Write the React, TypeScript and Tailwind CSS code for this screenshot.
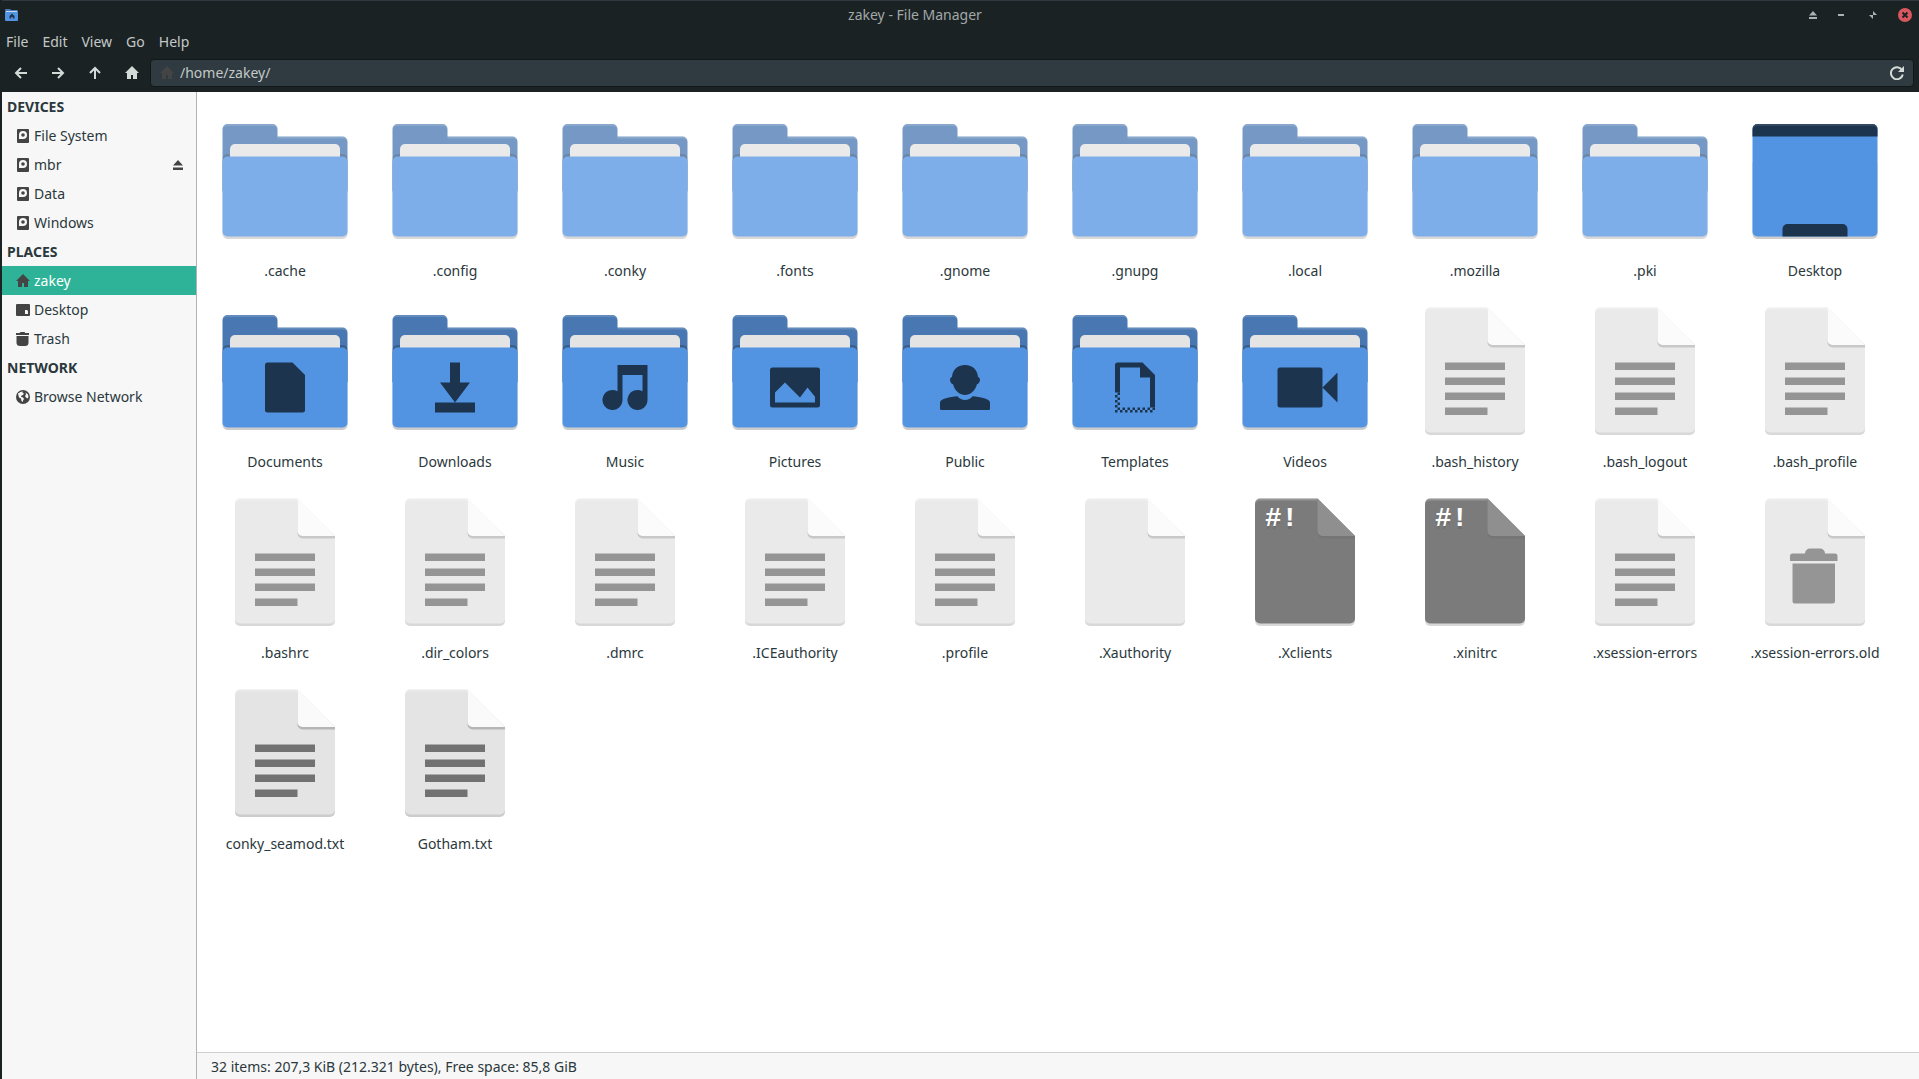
import React, { useState } from 'react';

type Glyph = 'document' | 'download' | 'music' | 'picture' | 'person' | 'template' | 'video';

type FileItem = {
  name: string;
  kind: 'folder' | 'desktop' | 'text' | 'blank' | 'script' | 'trash';
  glyph?: Glyph;
};

const files: FileItem[] = [
  { name: '.cache', kind: 'folder' },
  { name: '.config', kind: 'folder' },
  { name: '.conky', kind: 'folder' },
  { name: '.fonts', kind: 'folder' },
  { name: '.gnome', kind: 'folder' },
  { name: '.gnupg', kind: 'folder' },
  { name: '.local', kind: 'folder' },
  { name: '.mozilla', kind: 'folder' },
  { name: '.pki', kind: 'folder' },
  { name: 'Desktop', kind: 'desktop' },
  { name: 'Documents', kind: 'folder', glyph: 'document' },
  { name: 'Downloads', kind: 'folder', glyph: 'download' },
  { name: 'Music', kind: 'folder', glyph: 'music' },
  { name: 'Pictures', kind: 'folder', glyph: 'picture' },
  { name: 'Public', kind: 'folder', glyph: 'person' },
  { name: 'Templates', kind: 'folder', glyph: 'template' },
  { name: 'Videos', kind: 'folder', glyph: 'video' },
  { name: '.bash_history', kind: 'text' },
  { name: '.bash_logout', kind: 'text' },
  { name: '.bash_profile', kind: 'text' },
  { name: '.bashrc', kind: 'text' },
  { name: '.dir_colors', kind: 'text' },
  { name: '.dmrc', kind: 'text' },
  { name: '.ICEauthority', kind: 'text' },
  { name: '.profile', kind: 'text' },
  { name: '.Xauthority', kind: 'blank' },
  { name: '.Xclients', kind: 'script' },
  { name: '.xinitrc', kind: 'script' },
  { name: '.xsession-errors', kind: 'text' },
  { name: '.xsession-errors.old', kind: 'trash' },
  { name: 'conky_seamod.txt', kind: 'text' },
  { name: 'Gotham.txt', kind: 'text' },
];

const HOME_PATH = 'M7 0 0 7h2v6h4V9h2v4h4V7h2z';

// ---- small icons ----

function HomeIcon({ className }: { className?: string }) {
  return (
    <svg viewBox="0 0 14 14" className={className} fill="currentColor">
      <path d={HOME_PATH} />
    </svg>
  );
}

function DriveIcon() {
  return (
    <svg viewBox="0 0 14 14" className="w-3.5 h-3.5 text-[#444]">
      <rect x="1" y="0" width="12" height="14" rx="1" fill="currentColor" />
      <path d="M7 2a4 4 0 1 1 0 8H3V6a4 4 0 0 1 4-4z" fill="#f7f7f7" />
      <circle cx="7" cy="6" r="1.8" fill="currentColor" />
    </svg>
  );
}

function DesktopIcon() {
  return (
    <svg viewBox="0 0 14 14" className="w-3.5 h-3.5 text-[#444]">
      <rect x="0" y="1" width="14" height="12" rx="1" fill="currentColor" />
      <path d="M9 7h2l1 1v3H9z" fill="#f7f7f7" />
    </svg>
  );
}

function TrashIcon() {
  return (
    <svg viewBox="0 0 14 14" className="w-3.5 h-3.5 text-[#444]" fill="currentColor">
      <path d="M4.500 0h4l.8 1H13v2H0V1h3.700z" />
      <path d="M.5 4h12v6.500A3.500 3.500 0 0 1 9 14H4a3.500 3.500 0 0 1-3.500-3.500z" />
    </svg>
  );
}

function GlobeIcon() {
  return (
    <svg viewBox="0 0 14 14" className="w-3.5 h-3.5 text-[#444]">
      <circle cx="7" cy="7" r="7" fill="currentColor" />
      <path d="M2 3.500 4.500 2 7 1.500 6.500 3 8 3.500 7 5 5.500 5.500 5 7l2 .5L8 9l-1 1.500V12L5.500 11 5 8.500 3 7.500z" fill="#f7f7f7" />
      <path d="M9.500 2.500 12 4.500l.5 2.500-1 1.500-1.500-1L9 6l1-1.500z" fill="#f7f7f7" />
    </svg>
  );
}

function EjectIcon({ className }: { className?: string }) {
  return (
    <svg viewBox="0 0 10 10" preserveAspectRatio="none" className={className} fill="currentColor">
      <path d="M5 0 0 5.500h10zM0 7.500h10v2.500H0z" />
    </svg>
  );
}

function ArrowIcon({ d }: { d: string }) {
  return (
    <svg viewBox="0 0 14 14" className="w-3.5 h-3.5" fill="none" stroke="currentColor" strokeWidth="2">
      <path d={d} />
    </svg>
  );
}

function AppIcon() {
  return (
    <svg viewBox="0 0 13 12" className="w-[13px] h-3">
      <path d="M0 1a1 1 0 0 1 1-1h4l1 1h6a1 1 0 0 1 1 1v8H0z" fill="#4877b1" />
      <rect x="1" y="2" width="11" height="3" fill="#c9d7ea" />
      <rect x="0" y="3" width="13" height="9" rx="1" fill="#5294e2" />
      <path d="M7 4.500 4.500 7v2.500h1.700V8h1.600v1.500h1.700V7z" fill="#1d344f" />
    </svg>
  );
}

// ---- large icons, all on a 64 unit canvas ----

function FolderGlyph({ glyph }: { glyph: Glyph }) {
  switch (glyph) {
    case 'document':
      return <path d="M25 29h10l5 5v14a1 1 0 0 1-1 1H25a1 1 0 0 1-1-1V30a1 1 0 0 1 1-1z" />;
    case 'download':
      return <path d="M30 29h4v8h4l-6 8-6-8h4zM24 45h16v4H24z" />;
    case 'music':
      return <path d="M29 30h12v14a4 4 0 1 1-2-3.460V34h-8v10a4 4 0 1 1-2-3.460z" />;
    case 'picture':
      return (
        <path
          fillRule="evenodd"
          d="M23 31h18a1 1 0 0 1 1 1v14a1 1 0 0 1-1 1H23a1 1 0 0 1-1-1V32a1 1 0 0 1 1-1zM24 45h16v-2.300L37 39l-3 4-6-6-4 4z"
        />
      );
    case 'person':
      return (
        <>
          <path d="M32 30c3.200 0 5 2 5.200 4.800.5.100.8.600.8 1.200s-.5 1.600-1.200 1.700C36 40.500 34 42 32 42s-4-1.500-4.800-4.300C26.500 37.600 26 36.600 26 36s.3-1.100.8-1.200C27 32 28.800 30 32 30z" />
          <path d="M29 42.500c.8 1 1.800 1.500 3 1.500s2.200-.5 3-1.500c3 .2 7 1 7 2.500v2.500a.5.5 0 0 1-.5.500h-19a.5.5 0 0 1-.5-.5V45c0-1.500 4-2.300 7-2.500z" />
        </>
      );
    case 'template':
      return (
        <>
          <path d="M25 29h10l5 5v13h-2V35h-4v-4h-8v10h-2V30a1 1 0 0 1 1-1z" />
          {/* dotted corner that trails off along the left and bottom edges */}
          <path d="M24 42h1v1h-1zM25 41h1v1h-1zM25 43h1v1h-1zM24 44h1v1h-1zM25 45h1v1h-1zM24 46h1v1h-1z" />
          <path d="M25 47.500h15" fill="none" stroke="#1d344f" strokeDasharray="1 1" />
          <path d="M24 48.500h16" fill="none" stroke="#1d344f" strokeDasharray="1 1" />
        </>
      );
    case 'video':
      return <path d="M22 31h16a1 1 0 0 1 1 1v14a1 1 0 0 1-1 1H22a1 1 0 0 1-1-1V32a1 1 0 0 1 1-1zM39 39l6-6v12z" />;
  }
}

function FolderIcon({ glyph }: { glyph?: Glyph }) {
  return (
    <>
      <rect x="7" y="24" width="50" height="32" rx="2" fill="#000" fillOpacity=".2" />
      <path d="M9 10h18a2 2 0 0 1 2 2v3h26a2 2 0 0 1 2 2v20H7V12a2 2 0 0 1 2-2z" fill="#4877b1" />
      <path d="M9 10h18a2 2 0 0 1 2 2v.6a2 2 0 0 0-2-1.800H9a2 2 0 0 0-2 1.800V12a2 2 0 0 1 2-2zM29 15h26a2 2 0 0 1 2 2v.6a2 2 0 0 0-2-1.800H29z" fill="#fff" fillOpacity=".15" />
      <rect x="7" y="22" width="50" height="16" rx="2" fill="#000" fillOpacity=".2" />
      <path d="M10 20a2 2 0 0 1 2-2h40a2 2 0 0 1 2 2v10H10z" fill="#e4e4e4" />
      <rect x="7" y="23" width="50" height="32" rx="2" fill="#5294e2" />
      {glyph && (
        <g fill="#1d344f">
          <FolderGlyph glyph={glyph} />
        </g>
      )}
    </>
  );
}

function DesktopFolderIcon() {
  return (
    <>
      <rect x="7" y="24" width="50" height="32" rx="2" fill="#000" fillOpacity=".2" />
      <rect x="7" y="10" width="50" height="45" rx="2" fill="#5294e2" />
      <path d="M9 10h46a2 2 0 0 1 2 2v3H7v-3a2 2 0 0 1 2-2z" fill="#1d344f" />
      <path d="M9 10h46a2 2 0 0 1 2 2v.6a2 2 0 0 0-2-1.800H9a2 2 0 0 0-2 1.800V12a2 2 0 0 1 2-2z" fill="#fff" fillOpacity=".1" />
      <path d="M21 50h22a2 2 0 0 1 2 2v3H19v-3a2 2 0 0 1 2-2z" fill="#1d344f" />
    </>
  );
}

function PageIcon({ kind }: { kind: FileItem['kind'] }) {
  const dark = kind === 'script';
  return (
    <>
      <path d="M12 50h40v6a2 2 0 0 1-2 2H14a2 2 0 0 1-2-2z" fill="#000" fillOpacity=".2" />
      <path d="M14 7h23l15 15v33a2 2 0 0 1-2 2H14a2 2 0 0 1-2-2V9a2 2 0 0 1 2-2z" fill={dark ? '#505050' : '#e4e4e4'} />
      <path d="M14 7h23v.8H14a2 2 0 0 0-2 1.800V9a2 2 0 0 1 2-2z" fill="#fff" fillOpacity=".2" />
      <path d="M37 8v13a2 2 0 0 0 2 2h13v-1z" fill="#000" fillOpacity={dark ? '.1' : '.2'} />
      <path d="M37 7v13a2 2 0 0 0 2 2h13z" fill={dark ? '#6a6a6a' : '#fafafa'} />
      {kind === 'text' && (
        <path d="M20 29h24v3H20zM20 35h24v3H20zM20 41h24v3H20zM20 47h17v3H20z" fill="#727272" />
      )}
      {kind === 'trash' && (
        <path
          d="M30 27h4a2 2 0 0 1 2 2h4a1 1 0 0 1 1 1v2H22v-2a1 1 0 0 1 1-1h5a2 2 0 0 1 2-2zM23 33h17v15a1 1 0 0 1-1 1H24a1 1 0 0 1-1-1z"
          fill="#727272"
        />
      )}
      {dark && (
        <g fontSize="11" fontWeight="700" className="font-['Liberation_Mono',monospace]">
          <text x="16" y="19" fill="#000" fillOpacity=".2">#!</text>
          <text x="16" y="18" fill="#fff">#!</text>
        </g>
      )}
    </>
  );
}

function FileTile({ file }: { file: FileItem }) {
  const hidden = file.name.startsWith('.');
  return (
    <button className="flex flex-col items-center pb-[9px]">
      <svg viewBox="0 0 64 64" className={`w-40 h-40 ${hidden ? 'opacity-75' : ''}`}>
        {file.kind === 'folder' ? (
          <FolderIcon glyph={file.glyph} />
        ) : file.kind === 'desktop' ? (
          <DesktopFolderIcon />
        ) : (
          <PageIcon kind={file.kind} />
        )}
      </svg>
      <span className="mt-0.5 leading-5">{file.name}</span>
    </button>
  );
}

// ---- window chrome ----

function TitleBar() {
  return (
    <header className="h-7 pl-[3px] pr-1.5 flex items-center border-t border-[#2f3b40]">
      <div className="w-6">
        <AppIcon />
      </div>
      <h1 className="flex-1 text-center text-[#a1a8a8]">zakey - File Manager</h1>
      <div className="flex items-center gap-4 text-[#a9b3b1]">
        <button aria-label="Shade" className="w-4 h-4 flex items-center justify-end">
          <EjectIcon className="w-2 h-2" />
        </button>
        <button aria-label="Minimize" className="w-4 h-4 flex items-center justify-center">
          <span className="w-1.5 h-0.5 bg-current"></span>
        </button>
        <button aria-label="Maximize" className="w-4 h-4 flex items-center justify-center">
          <svg viewBox="0 0 8 8" className="w-2 h-2" fill="currentColor">
            <path d="M4 0v4h4zM0 4h4v4z" />
          </svg>
        </button>
        <button aria-label="Close" className="w-4 h-4 flex items-center justify-center">
          <svg viewBox="0 0 14 14" className="w-3.5 h-3.5">
            <circle cx="7" cy="7" r="7" fill="#d9575f" />
            <path d="M4.500 4.500l5 5M9.500 4.500l-5 5" stroke="#1b2224" strokeWidth="2" />
          </svg>
        </button>
      </div>
    </header>
  );
}

function MenuBar() {
  return (
    <nav className="h-7 pl-1 flex items-center gap-3.5 text-[#c3c9c8]">
      {['File', 'Edit', 'View', 'Go', 'Help'].map((item) => (
        <button key={item}>{item}</button>
      ))}
    </nav>
  );
}

function ToolBar() {
  const [path, setPath] = useState('/home/zakey/');

  return (
    <div className="h-9 pr-[5px] pb-0.5 flex items-center text-[#d3dad8]">
      <button aria-label="Back" className="w-[37px] h-7 flex items-center justify-center">
        <ArrowIcon d="M13 7H2M7 2 2 7l5 5" />
      </button>
      <button aria-label="Forward" className="w-[37px] h-7 flex items-center justify-center">
        <ArrowIcon d="M1 7h11M7 2l5 5-5 5" />
      </button>
      <button aria-label="Up" className="w-[37px] h-7 flex items-center justify-center">
        <ArrowIcon d="M7 13V2M2 7l5-5 5 5" />
      </button>
      <button aria-label="Home" className="w-[37px] h-7 flex items-center justify-center">
        <HomeIcon className="w-3.5 h-3.5" />
      </button>
      <div className="flex-1 h-7 px-[9px] flex items-center gap-1.5 rounded-sm border border-[#12181a] bg-[#2f3b40]">
        <HomeIcon className="w-3.5 h-3.5 text-[#444]" />
        <input
          aria-label="Location"
          className="flex-1 bg-transparent outline-none text-[#c3c9c8]"
          value={path}
          onChange={(e) => setPath(e.target.value)}
        />
        <button aria-label="Reload">
          <svg viewBox="0 0 14 14" className="w-3.5 h-3.5" fill="none" stroke="currentColor" strokeWidth="2">
            <path d="M12 4A6 6 0 1 0 12.800 8.500" />
            <path d="M14 0v6H8l2-2 2-2z" fill="currentColor" stroke="none" />
          </svg>
        </button>
      </div>
    </div>
  );
}

const sections = [
  {
    title: 'DEVICES',
    items: [
      { label: 'File System', icon: <DriveIcon /> },
      { label: 'mbr', icon: <DriveIcon />, mounted: true },
      { label: 'Data', icon: <DriveIcon /> },
      { label: 'Windows', icon: <DriveIcon /> },
    ],
  },
  {
    title: 'PLACES',
    items: [
      { label: 'zakey', icon: <HomeIcon className="w-3.5 h-3.5 text-[#444]" /> },
      { label: 'Desktop', icon: <DesktopIcon /> },
      { label: 'Trash', icon: <TrashIcon /> },
    ],
  },
  {
    title: 'NETWORK',
    items: [{ label: 'Browse Network', icon: <GlobeIcon /> }],
  },
];

function Sidebar() {
  const [selected, setSelected] = useState('zakey');

  return (
    <aside className="w-[195px] shrink-0 bg-[#f7f7f7] border-r border-[#b3b3b3]">
      {sections.map((section) => (
        <div key={section.title}>
          <h2 className="h-[29px] pl-[5px] flex items-center font-bold">{section.title}</h2>
          {section.items.map((item) => (
            <div
              key={item.label}
              className={`h-[29px] pl-3.5 pr-[13px] flex items-center ${
                selected === item.label ? 'bg-[#2eb398] text-white' : ''
              }`}
            >
              <button
                onClick={() => setSelected(item.label)}
                className="flex-1 flex items-center gap-1 text-left"
              >
                {item.icon}
                {item.label}
              </button>
              {'mounted' in item && (
                <button aria-label="Eject" className="text-[#444]">
                  <EjectIcon className="w-2.5 h-2.5" />
                </button>
              )}
            </div>
          ))}
        </div>
      ))}
    </aside>
  );
}

export default function App() {
  return (
    <div className="min-h-screen flex flex-col pl-0.5 bg-[#1b2224] text-[14px] leading-5 text-[#2b383c] font-['Noto_Sans',sans-serif]">
      <TitleBar />
      <MenuBar />
      <ToolBar />
      <div className="flex-1 flex">
        <Sidebar />
        <div className="flex-1 flex flex-col bg-white">
          <main className="flex-1 pt-[7px] pl-[3px] grid grid-cols-[repeat(auto-fill,170px)] content-start">
            {files.map((file) => (
              <FileTile key={file.name} file={file} />
            ))}
          </main>
          <footer className="h-[27px] pl-3.5 pt-0.5 flex items-center bg-[#f7f7f7] border-t border-[#cfcfcf]">
            32 items: 207,3 KiB (212.321 bytes), Free space: 85,8 GiB
          </footer>
        </div>
      </div>
    </div>
  );
}
